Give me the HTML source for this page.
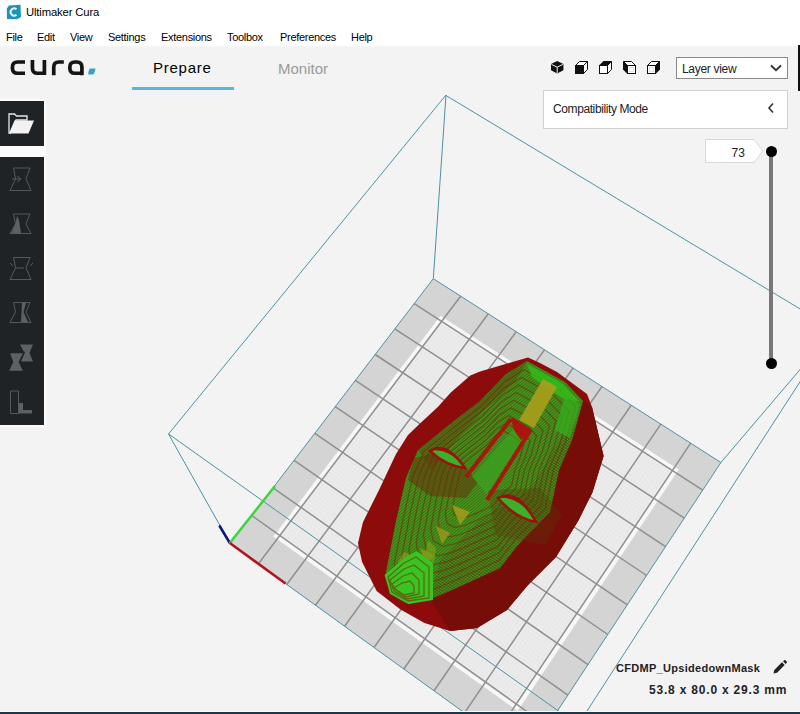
<!DOCTYPE html>
<html><head><meta charset="utf-8">
<style>
*{margin:0;padding:0;box-sizing:border-box}
html,body{width:800px;height:714px;overflow:hidden;background:#f3f3f3;font-family:"Liberation Sans",sans-serif;position:relative}
.abs{position:absolute}
#title{left:0;top:0;width:800px;height:26px;background:#fff}
#menu{left:0;top:26px;width:800px;height:21px;background:linear-gradient(#fff 0,#fff 19px,#f9f9f9 20px,#f5f5f5 21px)}
.t{position:absolute;white-space:nowrap;color:#000;line-height:1}
#view{left:0;top:45px;width:800px;height:669px;background:#f3f3f3}
</style></head><body>
<div id="view" class="abs"></div>
<svg class="abs" style="left:0;top:0" width="800" height="714" viewBox="0 0 800 714">
<polygon points="433.3,278.7 720.9,462.5 526.7,757.7 230.2,543.7" fill="#d4d4d4"/>
<polygon points="440.5,315.8 678.7,469.5 517.6,710.9 273.4,536.6" fill="#f7f7f7"/>
<polygon points="441.6,321.4 672.4,470.5 516.3,704.0 279.8,535.5" fill="#ececec"/>
<path d="M444.4,323.1L282.6,537.5M439.7,323.9L670.5,473.3M447.1,324.9L285.5,539.5M437.8,326.4L668.7,476.1M449.9,326.7L288.3,541.5M435.8,329.0L666.8,478.8M452.7,328.5L291.1,543.6M433.9,331.5L665.0,481.6M455.4,330.3L293.9,545.6M432.0,334.1L663.1,484.4M458.2,332.1L296.8,547.6M430.1,336.6L661.3,487.1M461.0,333.9L299.6,549.6M428.1,339.2L659.4,489.9M463.8,335.7L302.5,551.6M426.2,341.7L657.6,492.7M466.5,337.5L305.3,553.7M424.3,344.3L655.7,495.5M472.1,341.1L311.0,557.7M420.4,349.4L652.0,501.1M474.9,342.9L313.9,559.8M418.4,352.0L650.1,503.9M477.7,344.7L316.7,561.8M416.5,354.6L648.2,506.7M480.5,346.5L319.6,563.8M414.5,357.2L646.3,509.5M483.3,348.3L322.4,565.9M412.6,359.8L644.4,512.3M486.1,350.1L325.3,567.9M410.6,362.3L642.6,515.1M488.9,351.9L328.2,570.0M408.7,364.9L640.7,517.9M491.7,353.8L331.1,572.0M406.7,367.5L638.8,520.8M494.5,355.6L333.9,574.1M404.8,370.1L636.9,523.6M500.2,359.2L339.7,578.2M400.8,375.3L633.1,529.3M503.0,361.0L342.6,580.2M398.9,377.9L631.2,532.1M505.8,362.9L345.5,582.3M396.9,380.6L629.3,534.9M508.7,364.7L348.4,584.4M394.9,383.2L627.4,537.8M511.5,366.5L351.3,586.4M392.9,385.8L625.5,540.6M514.3,368.4L354.2,588.5M390.9,388.4L623.6,543.5M517.2,370.2L357.1,590.6M389.0,391.0L621.7,546.4M520.0,372.0L360.0,592.7M387.0,393.7L619.8,549.2M522.9,373.9L362.9,594.7M385.0,396.3L617.8,552.1M528.6,377.6L368.8,598.9M381.0,401.6L614.0,557.8M531.4,379.4L371.7,601.0M379.0,404.2L612.1,560.7M534.3,381.3L374.6,603.1M377.0,406.9L610.1,563.6M537.1,383.1L377.5,605.1M375.0,409.5L608.2,566.5M540.0,385.0L380.5,607.2M373.0,412.2L606.3,569.4M542.9,386.8L383.4,609.3M371.0,414.8L604.3,572.3M545.7,388.7L386.4,611.4M369.0,417.5L602.4,575.2M548.6,390.5L389.3,613.5M367.0,420.2L600.5,578.1M551.5,392.4L392.3,615.6M364.9,422.8L598.5,581.0M557.3,396.1L398.2,619.8M360.9,428.2L594.6,586.8M560.2,398.0L401.1,621.9M358.9,430.9L592.7,589.8M563.0,399.9L404.1,624.1M356.8,433.5L590.7,592.7M565.9,401.7L407.0,626.2M354.8,436.2L588.7,595.6M568.8,403.6L410.0,628.3M352.8,438.9L586.8,598.6M571.7,405.5L413.0,630.4M350.7,441.6L584.8,601.5M574.6,407.4L416.0,632.5M348.7,444.3L582.8,604.4M577.5,409.2L418.9,634.7M346.7,447.0L580.9,607.4M580.5,411.1L421.9,636.8M344.6,449.7L578.9,610.3M586.3,414.9L427.9,641.0M340.5,455.2L574.9,616.3M589.2,416.8L430.9,643.2M338.5,457.9L573.0,619.2M592.1,418.7L433.9,645.3M336.4,460.6L571.0,622.2M595.1,420.6L436.9,647.4M334.4,463.3L569.0,625.2M598.0,422.5L439.9,649.6M332.3,466.0L567.0,628.1M600.9,424.4L442.9,651.7M330.2,468.8L565.0,631.1M603.9,426.3L445.9,653.9M328.2,471.5L563.0,634.1M606.8,428.2L449.0,656.0M326.1,474.3L561.0,637.1M609.8,430.1L452.0,658.2M324.0,477.0L559.0,640.1M615.7,433.9L458.0,662.5M319.9,482.5L555.0,646.1M618.6,435.8L461.1,664.7M317.8,485.3L553.0,649.1M621.6,437.7L464.1,666.8M315.7,488.0L551.0,652.1M624.5,439.6L467.1,669.0M313.6,490.8L548.9,655.1M627.5,441.5L470.2,671.2M311.5,493.5L546.9,658.1M630.5,443.4L473.2,673.3M309.4,496.3L544.9,661.2M633.4,445.4L476.3,675.5M307.3,499.1L542.9,664.2M636.4,447.3L479.3,677.7M305.2,501.9L540.8,667.2M639.4,449.2L482.4,679.9M303.1,504.6L538.8,670.3M645.4,453.1L488.5,684.2M298.9,510.2L534.7,676.4M648.3,455.0L491.6,686.4M296.8,513.0L532.7,679.4M651.3,456.9L494.6,688.6M294.7,515.8L530.7,682.5M654.3,458.9L497.7,690.8M292.6,518.6L528.6,685.5M657.3,460.8L500.8,693.0M290.5,521.4L526.6,688.6M660.3,462.7L503.9,695.2M288.3,524.2L524.5,691.7M663.3,464.7L507.0,697.4M286.2,527.0L522.4,694.7M666.4,466.6L510.1,699.6M284.1,529.9L520.4,697.8M669.4,468.6L513.2,701.8M281.9,532.7L518.3,700.9" stroke="#e2e2e2" stroke-width="0.5" fill="none"/>
<path d="M460.6,296.2L258.3,564.0M414.2,303.6L702.7,490.2M488.3,313.8L286.7,584.5M394.8,328.9L684.3,518.2M516.2,331.7L315.5,605.2M375.2,354.5L665.6,546.7M544.5,349.8L344.6,626.2M355.3,380.4L646.6,575.5M573.1,368.0L374.0,647.5M335.2,406.7L627.3,604.8M602.0,386.5L403.8,669.0M314.8,433.4L607.8,634.5M631.2,405.2L434.0,690.8M294.1,460.4L588.0,664.6M660.8,424.1L464.5,712.8M273.1,487.8L567.9,695.2M690.7,443.2L495.4,735.1M251.8,515.5L547.5,726.2" stroke="#8f8f8f" stroke-width="1.5" fill="none"/>
<defs>
<pattern id="stA" width="2.2" height="2.2" patternUnits="userSpaceOnUse" patternTransform="rotate(-40)">
<rect width="2.2" height="0.8" fill="#6a2a08" opacity="0.7"/>
</pattern>
<pattern id="stB" width="2.4" height="2.4" patternUnits="userSpaceOnUse" patternTransform="rotate(33)">
<rect width="2.4" height="0.9" fill="#5a1a06" opacity="0.65"/>
</pattern>
<pattern id="stR" width="2" height="2" patternUnits="userSpaceOnUse" patternTransform="rotate(33)">
<rect width="2" height="0.9" fill="#6a0606"/>
</pattern>
<linearGradient id="faceG" x1="0" y1="0" x2="1" y2="0.2">
<stop offset="0" stop-color="#3aa41e"/><stop offset="0.55" stop-color="#38a01c"/><stop offset="1" stop-color="#2f8a14"/>
</linearGradient>
<linearGradient id="redOv" gradientUnits="userSpaceOnUse" x1="470" y1="470" x2="575" y2="540">
<stop offset="0" stop-color="#7a0e08" stop-opacity="0"/><stop offset="0.5" stop-color="#7a0e08" stop-opacity="0.55"/><stop offset="1" stop-color="#7a0e08" stop-opacity="1"/>
</linearGradient>
</defs>
<g stroke="#4b93a3" stroke-width="1" fill="none">
<path d="M433.3,278.7L720.9,462.5L526.7,757.7L230.2,543.7Z"/>
<path d="M446,95L168.5,434M446,95.5L835,330M433.3,278.7L446,95M230.2,543.7L168.5,434M720.9,462.5L835,328.5M168.5,433.95L578,724.9M834.5,328.5L578,724.9"/>
</g>
<g stroke-width="2.5" stroke-linecap="butt">
<path d="M229.8,543L219.3,525.5" stroke="#0a1580"/>
<path d="M229.8,543L275,486" stroke="#3fd43f"/>
<path d="M229.8,543L285.5,583.6" stroke="#b0141e"/>
</g>
<!-- mask hull -->
<polygon points="528,357.5 540,363 557,372 587,394 592,407 603.6,456 592.4,492.4 578.4,520.4 556,557 528,585 507,610 477,628 450,631 424.5,623 400.5,609.6 376.6,591 362,561.7 358,543 363,522 379,490 396,454 408,435 420,423.4 437.8,407 450.8,392.5 470.3,375.4 480,371.4" fill="#8e0b0b"/>
<polygon points="583,401 592,407 603.6,456 592.4,492.4 578.4,520.4 556,557 528,585 507,610 477,628 450,631 430,599 450,591 500,568 517,546 550,512 559,470 572,440" fill="#7a0f08"/>
<polygon points="583,401 592,407 603.6,456 592.4,492.4 578.4,520.4 556,557 528,585 507,610 477,628 450,631 430,599 450,591 500,568 517,546 550,512 559,470 572,440" fill="url(#stR)" opacity="0.5"/>
<!-- face -->
<polygon id="face" points="527,361 565,382 583,401 572,440 559,470 550,512 517,546 500,568 450,591 430,599 408,604 390,594 386,572 396,521 406,478 418,450 445,428 480,401 506,374" fill="#389c1c"/>
<polygon points="527,361 565,382 583,401 572,440 559,470 550,512 517,546 500,568 450,591 430,599 408,604 390,594 386,572 396,521 406,478 418,450 445,428 480,401 506,374" fill="url(#stA)" opacity="0.75"/>
<polygon points="572,440 559,470 550,512 517,546 500,568 450,591 430,599 440,560 480,520 530,490 560,440 575,420" fill="url(#stB)" opacity="0.7"/>
<!-- upper-left dark transition band -->
<path d="M445,428L480,401L506,374L527,361L515,382L484,410L460,436L432,470L418,450Z" fill="#6a2a08" opacity="0.35"/>
<!--rings-->
<polygon points="524.0,369.7 559.0,389.0 575.6,406.5 565.4,442.4 553.5,470.0 545.2,508.6 514.8,539.9 499.2,560.2 453.2,581.3 434.8,588.7 414.6,593.3 398.0,584.1 394.3,563.8 403.5,516.9 412.7,477.4 423.8,451.6 448.6,431.4 480.8,406.5 504.7,381.7" fill="none" stroke="#7a1a08" stroke-width="1.2" opacity="0.5"/>
<polygon points="521.5,377.4 553.8,395.2 569.0,411.4 559.7,444.5 548.6,470.0 541.0,505.7 513.0,534.6 498.5,553.3 456.0,572.9 439.0,579.6 420.3,583.9 405.0,575.4 401.6,556.7 410.1,513.4 418.6,476.8 428.8,453.0 451.8,434.3 481.5,411.4 503.6,388.4" fill="none" stroke="#7a1a08" stroke-width="1.2" opacity="0.5"/>
<polygon points="518.9,385.0 548.5,401.4 562.5,416.2 554.0,446.6 543.8,470.0 536.8,502.8 511.1,529.3 497.8,546.4 458.8,564.4 443.2,570.6 426.0,574.5 412.0,566.7 408.9,549.6 416.7,509.8 424.5,476.2 433.8,454.4 454.9,437.2 482.2,416.2 502.5,395.1" fill="none" stroke="#7a1a08" stroke-width="1.2" opacity="0.5"/>
<polygon points="516.3,392.6 543.2,407.5 556.0,421.0 548.2,448.7 539.0,470.0 532.6,499.8 509.2,524.0 497.1,539.6 461.6,555.9 447.4,561.6 431.8,565.1 419.0,558.0 416.2,542.4 423.3,506.2 430.4,475.7 438.9,455.8 458.1,440.2 482.9,421.0 501.4,401.8" fill="none" stroke="#7a1a08" stroke-width="1.2" opacity="0.5"/>
<polygon points="513.7,400.2 538.0,413.7 549.5,425.8 542.5,450.8 534.2,470.0 528.4,496.9 507.3,518.6 496.4,532.7 464.4,547.4 451.6,552.6 437.5,555.8 426.0,549.4 423.4,535.3 429.8,502.6 436.2,475.1 443.9,457.2 461.2,443.1 483.6,425.8 500.2,408.6" fill="none" stroke="#7a1a08" stroke-width="1.2" opacity="0.5"/>
<polygon points="511.1,407.9 532.8,419.8 543.0,430.7 536.7,452.9 529.3,470.0 524.2,493.9 505.4,513.3 495.7,525.9 467.2,539.0 455.8,543.5 443.3,546.4 433.0,540.7 430.7,528.1 436.4,499.1 442.1,474.6 449.0,458.6 464.4,446.1 484.3,430.7 499.1,415.3" fill="none" stroke="#7a1a08" stroke-width="1.2" opacity="0.5"/>
<polygon points="508.5,415.5 527.5,426.0 536.5,435.5 531.0,455.0 524.5,470.0 520.0,491.0 503.5,508.0 495.0,519.0 470.0,530.5 460.0,534.5 449.0,537.0 440.0,532.0 438.0,521.0 443.0,495.5 448.0,474.0 454.0,460.0 467.5,449.0 485.0,435.5 498.0,422.0" fill="none" stroke="#7a1a08" stroke-width="1.2" opacity="0.5"/>
<polygon points="505.9,423.1 522.2,432.2 530.0,440.3 525.3,457.1 519.7,470.0 515.8,488.1 501.6,502.7 494.3,512.1 472.8,522.0 464.2,525.5 454.7,527.6 447.0,523.3 445.3,513.9 449.6,491.9 453.9,473.4 459.0,461.4 470.6,451.9 485.7,440.3 496.9,428.7" fill="none" stroke="#7a1a08" stroke-width="1.2" opacity="0.5"/>
<polygon points="503.3,430.8 517.0,438.3 523.5,445.2 519.5,459.2 514.8,470.0 511.6,485.1 499.7,497.4 493.6,505.3 475.6,513.6 468.4,516.4 460.5,518.2 454.0,514.6 452.6,506.7 456.2,488.4 459.8,472.9 464.1,462.8 473.8,454.9 486.4,445.2 495.8,435.4" fill="none" stroke="#7a1a08" stroke-width="1.2" opacity="0.5"/>
<!--/rings-->
<!-- forehead -->
<path d="M527,364L562,383L580,402L562,398L532,377Z" fill="#2fc01c" opacity="0.8"/>
<path d="M543,379L557,387L534,428L519,420Z" fill="#a8a01c" opacity="0.9"/>
<path d="M565,395L580,404L570,438L555,430Z" fill="#34b020" opacity="0.7"/>
<!-- dark around eyes -->
<path d="M414,458L440,452L466,468L478,482L466,498L430,496L408,480Z" fill="#6a2a08" opacity="0.5"/>
<path d="M488,490L540,488L562,515L545,545L495,535Z" fill="#5a3a0a" opacity="0.35"/>
<!-- eyes -->
<path d="M430,451Q446,441 465,468Q446,466 430,451Z" fill="#3db02a" stroke="#9a120c" stroke-width="2.5"/><path d="M429,451Q446,438 466,468Q448,447 429,451Z" fill="#9a120c"/>
<path d="M498,498Q517,488 536,522Q515,518 498,498Z" fill="#3db02a" stroke="#9a120c" stroke-width="2.5"/><path d="M497,498Q518,485 537,522Q519,495 497,498Z" fill="#9a120c"/>
<!-- nose -->
<path d="M514,428L526,434L487,494L472,477Z" fill="#3aa824" opacity="0.6"/>
<path d="M511,419L530,431L487,500M511,419L466,477" stroke="#a8160e" stroke-width="4" fill="none" stroke-linejoin="round"/><path d="M511,420L530,431L521,440L514,430Z" fill="#a8160e"/>
<!-- yellow patches -->
<path d="M452,505L470,512L460,525Z" fill="#a8a01c" opacity="0.8"/>
<path d="M436,526L450,533L442,544Z" fill="#a8a01c" opacity="0.7"/>
<path d="M420,548L434,555L426,564Z" fill="#a8a01c" opacity="0.6"/>
<path d="M404,552L418,558L410,568L398,562Z" fill="#a09a1c" opacity="0.6"/>
<!-- chin -->
<path d="M384.6,575L403,559L416.5,551L433,563L433,600L408.5,604L390,593.6Z" fill="#3ac424"/>
<g fill="none" stroke="#5a6a10" stroke-width="1.3">
<path d="M388,577L404,563L416,557L429,567L429,598L408,601L392,592Z"/>
<path d="M390,580L404,569L414,565L424,573L424,596L407,599L394,591Z"/>
<path d="M392,584L403,576L412,573L419,580L419,594L406,597L396,590Z"/>
<path d="M394,588L402,583L410,581L414,586L414,593L404,595L398,591Z"/>
</g>
<path d="M425,556L434,563L436,548L428,540Z" fill="#7aa018" opacity="0.7"/>


</svg>
<div id="title" class="abs">
  <svg class="abs" style="left:6px;top:4px" width="16" height="16" viewBox="0 0 16 16">
    <path d="M3,1.5 L14.5,0.8 L15,13 L11,15.2 L1,15 L0.8,4.5 Z" fill="#1f93b6"/>
    <path d="M10.5,5.2 A3.6,3.6 0 1 0 10.5,10.8" stroke="#dff4fb" stroke-width="2" fill="none"/>
  </svg>
  <div class="t" style="left:26px;top:7px;font-size:11.3px;letter-spacing:-0.15px">Ultimaker Cura</div>
</div>
<div id="menu" class="abs">
  <div class="t" style="left:6px;top:6px;font-size:11px;letter-spacing:-0.3px">File</div>
  <div class="t" style="left:37px;top:6px;font-size:11px;letter-spacing:-0.3px">Edit</div>
  <div class="t" style="left:70px;top:6px;font-size:11px;letter-spacing:-0.3px">View</div>
  <div class="t" style="left:108px;top:6px;font-size:11px;letter-spacing:-0.3px">Settings</div>
  <div class="t" style="left:161px;top:6px;font-size:11px;letter-spacing:-0.3px">Extensions</div>
  <div class="t" style="left:227px;top:6px;font-size:11px;letter-spacing:-0.3px">Toolbox</div>
  <div class="t" style="left:280px;top:6px;font-size:11px;letter-spacing:-0.3px">Preferences</div>
  <div class="t" style="left:351px;top:6px;font-size:11px;letter-spacing:-0.3px">Help</div>
</div>
<svg class="abs" style="left:0;top:45px" width="100" height="40" viewBox="0 45 100 40">
<g stroke="#141414" stroke-width="3.7" fill="none">
<path d="M25,62H17.6Q12.45,62 12.45,67.1V68.2Q12.45,73.25 17.6,73.25H25"/>
<path d="M32.45,60V68.2Q32.45,73.25 37.6,73.25H44.4V60"/>
<path d="M53.75,75.3V67.1Q53.75,62 58.9,62H63.8"/>
<path d="M81.9,75.3V67.1Q81.9,62 76.8,62H74.9Q69.85,62 69.85,67.1V68.2Q69.85,73.25 74.9,73.25H81.9"/>
</g>
<path d="M90.2,68.4H94.6Q95.9,68.4 95.5,69.6L94.2,73.3Q93.8,74.5 92.6,74.5H89.2Q87.8,74.5 88.2,73.3L89,70Q89.4,68.4 90.2,68.4Z" fill="#3aa2c6"/>
</svg>
<div class="t" style="left:153px;top:60px;font-size:15px;letter-spacing:0.75px">Prepare</div>
<div class="abs" style="left:132px;top:87px;width:102px;height:3px;background:#5ab5d6"></div>
<div class="t" style="left:278px;top:61px;font-size:15px;color:#9a9a9a">Monitor</div>
<svg class="abs" style="left:540px;top:55px" width="130" height="25" viewBox="540 55 130 25">
<g transform="translate(551,61)">
<path d="M6.2,0L12.4,3.1V9.3L6.2,12.4L0,9.3V3.1Z" fill="#111"/>
<path d="M0.5,3.4L6.2,6.2L11.9,3.4M6.2,6.2V12" stroke="#f3f3f3" stroke-width="1" fill="none"/>
</g>
<g transform="translate(575,61)" stroke="#111" stroke-width="1" fill="#fff">
<path d="M0.5,4.5L4.5,0.5H12.5L8.5,4.5Z"/><path d="M8.5,4.5L12.5,0.5V8.5L8.5,12.5Z"/>
<rect x="0" y="4" width="9" height="9" fill="#111" stroke="none"/>
</g>
<g transform="translate(599,61)" stroke="#111" stroke-width="1" fill="#fff">
<path d="M8.5,4.5L12.5,0.5V8.5L8.5,12.5Z"/><rect x="0.5" y="4.5" width="8" height="8"/>
<path d="M0,4.5L4.5,0H13L8.5,4.5Z" fill="#111" stroke="none"/>
</g>
<g transform="translate(623,61)" stroke="#111" stroke-width="1" fill="#fff">
<path d="M0.5,0.5H8.5L12.5,4.5H4.5Z"/><rect x="4.5" y="4.5" width="8" height="8"/><rect x="6.5" y="6.5" width="4" height="4" stroke="#e6e6e6"/>
<path d="M0,0L4.5,4.5V13L0,8.5Z" fill="#111" stroke="none"/>
</g>
<g transform="translate(647,61)" stroke="#111" stroke-width="1" fill="#fff">
<path d="M0.5,4.5L4.5,0.5H12.5L8.5,4.5Z"/><rect x="0.5" y="4.5" width="8" height="8"/><rect x="2.5" y="6.5" width="4" height="4" stroke="#e6e6e6"/>
<path d="M8.5,4.5L13,0V8.5L8.5,13Z" fill="#111" stroke="none"/>
</g>
</svg>
<div class="abs" style="left:676px;top:57px;width:112px;height:22px;background:#fff;border:1px solid #8a8a8a"></div>
<div class="t" style="left:682px;top:63px;font-size:12px;letter-spacing:-0.3px;color:#222">Layer view</div>
<svg class="abs" style="left:769px;top:63px" width="14" height="10" viewBox="0 0 14 10"><path d="M2,2.5L7,7.2L12,2.5" stroke="#333" stroke-width="1.8" fill="none"/></svg>
<div class="abs" style="left:798px;top:45px;width:2px;height:46px;background:#111"></div>
<div class="abs" style="left:0;top:99px;width:46px;height:328px;background:#fbfbfb"></div>
<div class="abs" style="left:0;top:101px;width:44px;height:45px;background:#1f2326"></div>
<div class="abs" style="left:0;top:157px;width:44px;height:268px;background:#1f2326"></div>
<svg class="abs" style="left:0;top:100px" width="44" height="330" viewBox="0 100 44 330">
<path d="M9,114H14.5L16.5,116H27V120H16L10.5,133H9Z" fill="none" stroke="#e8e8e8" stroke-width="1.3"/>
<path d="M14.5,120.5H34L28.5,133.5H9Z" fill="#f2f2f2"/>
<g stroke="#55595c" stroke-width="1" fill="none">
<path d="M13.5,168H30L26,179L31,190.5H10L15.5,179Z"/><path d="M12,179H20M17,176L21,179L17,182" />
<path d="M13.5,214H30L26,224L31,233.5H10L15.5,224Z"/>
<path d="M13.5,257.5H30L26,268L31,279.5H10L15.5,268Z"/><path d="M10,263L13,266M33,263L30,266M15,268H24"/>
<path d="M13.5,302.5H30L26,312L31,322.5H10L15.5,312Z"/>

<path d="M10.5,391H18.5V413.5H10.5Z"/>
</g>
<g fill="#5d6164">
<path d="M11,233.5L15.5,224L17,216L19,220L21,233.5Z"/>
<path d="M22,303H26L23.5,312L28,322H21Z"/>
<path d="M20,344.5H33L29.5,353L33,361.5H21L24.5,353Z"/><path d="M9,352.5H24L19.5,362L24,371.5H8L12.5,362Z" stroke="#1f2326" stroke-width="1.5"/>
<path d="M19,403H23V410H32V413.5H19Z"/>
</g>
</svg>
<div class="abs" style="left:543px;top:90px;width:245px;height:39px;background:#fff;border:1px solid #d0d0d0"></div>
<div class="t" style="left:553px;top:103px;font-size:12px;letter-spacing:-0.4px;color:#222">Compatibility Mode</div>
<svg class="abs" style="left:766px;top:102px" width="10" height="12" viewBox="0 0 10 12"><path d="M7,1.5L3,6L7,10.5" stroke="#333" stroke-width="1.6" fill="none"/></svg>
<div class="abs" style="left:769px;top:151px;width:4px;height:212px;background:#777"></div>
<div class="abs" style="left:765.5px;top:145.5px;width:11px;height:11px;border-radius:50%;background:#000"></div>
<div class="abs" style="left:765.5px;top:357.5px;width:11px;height:11px;border-radius:50%;background:#000"></div>
<svg class="abs" style="left:704px;top:138px" width="62" height="26" viewBox="704 138 62 26"><path d="M705.5,139.5H754L763,151L754,162.5H705.5Z" fill="#fff" stroke="#d8d8d8" stroke-width="1"/></svg>
<div class="t" style="left:731.5px;top:147px;font-size:12px;color:#222">73</div>
<div class="t" style="left:616px;top:663px;font-size:11px;font-weight:bold;letter-spacing:0.3px;color:#222">CFDMP_UpsidedownMask</div>
<svg class="abs" style="left:772px;top:660px" width="16" height="15" viewBox="0 0 16 15"><path d="M1.5,13.5L2.3,10L10,2.3L12.7,5L5,12.7Z" fill="#222"/><path d="M11,1.3L12.2,0.3Q12.8,-0.2 13.4,0.3L14.7,1.6Q15.2,2.2 14.7,2.8L13.7,4Z" fill="#222"/></svg>
<div class="t" style="left:649px;top:684px;font-size:12px;font-weight:bold;letter-spacing:0.8px;color:#222">53.8 x 80.0 x 29.3 mm</div>
<div class="abs" style="left:0;top:711px;width:800px;height:1px;background:#fbfdfd"></div><div class="abs" style="left:0;top:712px;width:800px;height:2px;background:#1d3748"></div>

</body></html>
